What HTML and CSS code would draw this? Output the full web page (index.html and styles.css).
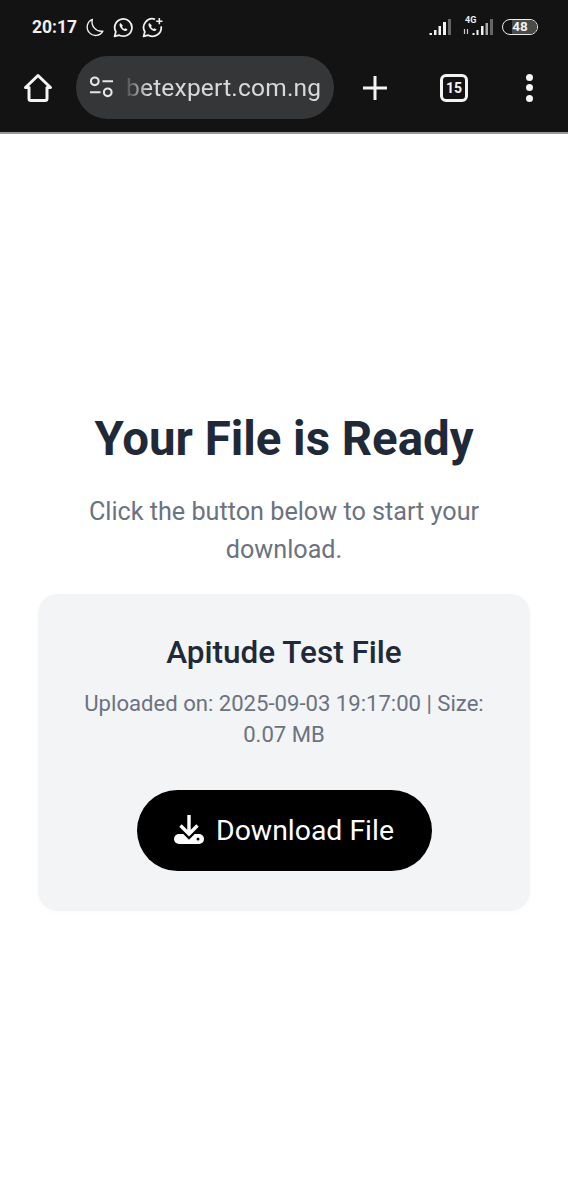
FILE: index.html
```html
<!DOCTYPE html>
<html lang="en">
<head>
<meta charset="utf-8">
<title>Your File is Ready</title>
<link rel="stylesheet" href="styles.css">
</head>
<body>
<header class="chrome">
  <div class="status">
    <div class="status-left">
      <span class="time">20:17</span>
      <svg class="st-icon" viewBox="0 0 20 20"><path d="M8 2.200A8 8 0 1 0 18 13.500 9 9 0 0 1 8 2.200Z" fill="none" stroke="#f2f2f2" stroke-width="1.300" stroke-linejoin="round"/></svg>
      <svg class="st-icon wa" viewBox="0 0 20 20"><path d="M1.500 18.500l1.200-4.400A8.200 8.200 0 1 1 6 17.300Z" fill="none" stroke="#f2f2f2" stroke-width="1.700" stroke-linejoin="round"/><path d="M7 5.800c-1 .8-1 2.200-.2 3.800 1 1.800 2.600 3.200 4.400 3.700 1.300.3 2.300-.2 2.700-1.300l-2-1.300-1 .8c-1-.5-1.800-1.300-2.300-2.300l.8-1Z" fill="#f2f2f2"/></svg>
      <svg class="st-icon wa" viewBox="0 0 20 20"><path d="M12.500 2.200A8.200 8.200 0 0 0 2.700 14.100L1.500 18.500 6 17.300A8.200 8.200 0 0 0 18.200 9" fill="none" stroke="#f2f2f2" stroke-width="1.700" stroke-linejoin="round"/><path d="M7 5.800c-1 .8-1 2.200-.2 3.800 1 1.800 2.600 3.200 4.400 3.700 1.300.3 2.300-.2 2.700-1.300l-2-1.300-1 .8c-1-.5-1.800-1.300-2.300-2.300l.8-1Z" fill="#f2f2f2"/><path d="M16.500 1v6M13.500 4h6" stroke="#f2f2f2" stroke-width="1.500"/></svg>
    </div>
    <div class="status-right">
      <svg class="signal" viewBox="0 0 22 16"><path d="M.5 14H3v2H.5zM5 11h2.500v5H5zM9.500 7H12v9H9.500zM14 3h3v13h-3z" fill="#f2f2f2"/><path d="M19 0h3v16h-3z" fill="#666"/></svg>
      <div class="net">
        <span class="net-label">4G</span>
        <svg class="signal-small" viewBox="0 0 32 16"><path d="M2.500 10v5M5.500 10v5" stroke="#ccc" stroke-width="1.200"/><path d="M10.500 14h2v2h-2zM14.500 11h2v5h-2zM19 7h2.500v9H19z" fill="#f2f2f2"/><path d="M23.500 4H26v12h-2.500z" fill="#aaa"/><path d="M28 0h3v16h-3z" fill="#666"/></svg>
      </div>
      <div class="battery"><span class="battery-fill"></span><span class="battery-num">48</span></div>
    </div>
  </div>
  <div class="toolbar">
    <svg class="home" viewBox="0 0 30 30"><path d="M2.500 14.500 15 2.500l12.500 12h-3.500v11a2 2 0 0 1-2 2H8a2 2 0 0 1-2-2v-11Z" fill="none" stroke="#f4f4f4" stroke-width="3" stroke-linejoin="round"/></svg>
    <div class="omnibox">
      <svg class="tune" viewBox="0 0 26 24"><circle cx="6" cy="5.500" r="4" fill="none" stroke="#e6e6e6" stroke-width="2.200"/><path d="M14 5.500h11M1 17h11" stroke="#e6e6e6" stroke-width="2.200"/><circle cx="19.500" cy="17" r="4" fill="none" stroke="#e6e6e6" stroke-width="2.200"/></svg>
      <span class="url">betexpert.com.ng</span>
    </div>
    <svg class="plus" viewBox="0 0 26 26"><path d="M13 1v24M1 13h24" stroke="#f4f4f4" stroke-width="3"/></svg>
    <div class="tabs">15</div>
    <div class="menu"><span></span><span></span><span></span></div>
  </div>
</header>
<main class="page">
  <h1 class="title">Your File is Ready</h1>
  <p class="lead">Click the button below to start your download.</p>
  <section class="card">
    <h2 class="file-name">Apitude Test File</h2>
    <p class="meta">Uploaded on: 2025-09-03 19:17:00 | Size: 0.07 MB</p>
    <a class="button" href="#">
      <svg class="dl" viewBox="0 0 30 30"><rect x="0" y="19" width="30" height="10" rx="5" fill="#fff"/><path d="M6 10l9 9 9-9" fill="none" stroke="#000" stroke-width="8"/><path d="M15 0v19M6.500 10.500 15 19l8.500-8.500" fill="none" stroke="#fff" stroke-width="3.400"/><circle cx="24" cy="24" r="1.500" fill="#000"/></svg>
      <span>Download File</span>
    </a>
  </section>
</main>
</body>
</html>
```
FILE: styles.css
```css
* { box-sizing: border-box; }
html, body { margin: 0; padding: 0; }
body { background: #fff; font-family: Roboto, "Noto Sans", sans-serif; width: 568px; min-height: 1200px; overflow: hidden; }
.chrome { background: #131313; height: 134px; border-bottom: 2px solid #9a9a9a; }
.status { height: 55px; padding: 16px 30px 0 32px; display: flex; justify-content: space-between; align-items: flex-start; }
.status-left { display: flex; align-items: center; gap: 4px; height: 22px; }
.time { font-size: 17.500px; font-weight: 700; color: #efefef; margin-right: 3px; }
.st-icon { width: 21px; height: 21px; display: block; }
.wa { margin-left: 4px; }
.status-right { display: flex; align-items: flex-start; }
.signal { display: block; width: 22px; height: 16px; margin-top: 3px; }
.net { width: 32px; height: 19px; margin-left: 11px; position: relative; }
.net-label { position: absolute; left: 3px; top: 0; font-size: 9px; font-weight: 700; color: #eee; line-height: 9px; }
.signal-small { display: block; width: 32px; height: 16px; margin-top: 3px; }
.battery { width: 36px; height: 16px; margin: 3px 0 0 8px; border: 1.500px solid #eee; border-radius: 8px; position: relative; display: flex; align-items: center; justify-content: center; overflow: hidden; }
.battery-fill { position: absolute; left: 9px; right: 0; top: 0; bottom: 0; background: #4a4a4a; }
.battery-num { position: relative; font-size: 13.500px; font-weight: 700; color: #f2f2f2; line-height: 1; }
.toolbar { display: flex; align-items: center; height: 63px; margin-top: 1px; padding-left: 23px; }
.home { width: 30px; height: 30px; margin-right: 23px; }
.omnibox { width: 258px; height: 63px; background: #353638; border-radius: 32px; display: flex; align-items: center; padding-left: 13px; }
.tune { width: 25px; height: 23px; margin-right: 12px; }
.url { font-size: 24.500px; color: #d9d9d9; letter-spacing: .2px; -webkit-mask-image: linear-gradient(90deg, rgba(0,0,0,.15) 0, #000 22px); mask-image: linear-gradient(90deg, rgba(0,0,0,.15) 0, #000 22px); }
.plus { width: 26px; height: 26px; margin-left: 28px; }
.tabs { width: 28px; height: 28px; border: 3px solid #f4f4f4; border-radius: 6px; margin-left: 52px; color: #f4f4f4; font-size: 14px; font-weight: 700; display: flex; align-items: center; justify-content: center; }
.menu { display: flex; flex-direction: column; gap: 3.500px; margin-left: 58px; }
.menu span { width: 7px; height: 7px; border-radius: 50%; background: #f4f4f4; }
.page { padding: 279px 38px 0; text-align: center; }
.title { margin: 0; font-size: 47.400px; font-weight: 700; color: #1f2937; line-height: 52px; }
.lead { margin: 28px 0 0; font-size: 25.200px; line-height: 37.800px; color: #6b7280; padding: 0 40px; }
.card { margin-top: 25px; height: 317px; background: #f3f4f6; border-radius: 20px; box-shadow: 0 1px 6px rgba(0,0,0,.025); padding: 40px 32px 0; }
.file-name { margin: 0; font-size: 31.500px; font-weight: 500; color: #1f2937; line-height: 38px; }
.meta { margin: 16px 0 0; font-size: 22.100px; line-height: 31.500px; color: #6b7280; }
.button { display: inline-flex; align-items: center; justify-content: center; gap: 12px; margin-top: 39px; width: 295px; height: 81px; border-radius: 41px; background: #000; color: #fff; font-size: 28.400px; text-decoration: none; }
.dl { width: 30px; height: 30px; margin-bottom: 1px; }
```
